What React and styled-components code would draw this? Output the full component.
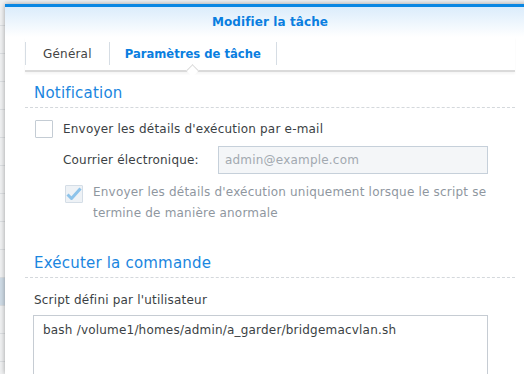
import React from "react";
import styled, { createGlobalStyle } from "styled-components";

const GlobalStyle = createGlobalStyle`
  html, body {
    margin: 0;
    padding: 0;
    width: 524px;
    height: 374px;
    overflow: hidden;
    background: #eef0f2;
    font-family: "DejaVu Sans", Verdana, sans-serif;
  }
`;

const Page = styled.div`
  display: flex;
  width: 524px;
  height: 374px;
  overflow: hidden;
`;

const BackList = styled.div`
  flex: 0 0 5px;
  display: flex;
  flex-direction: column;
  background: #f0f1f2;
`;

const BackRow = styled.div`
  flex: 0 0 ${(p) => (p.first ? 26 : 28)}px;
  box-sizing: border-box;
  border-bottom: 1px solid #dcdfe2;
  background: ${(p) => (p.selected ? "#cfdbe6" : "transparent")};
`;

const Modal = styled.div`
  flex: 0 0 530px;
  margin-top: 4px;
  background: #fff;
  border-top: 3px solid #0a87e3;
  box-shadow: 0 0 5px rgba(0, 0, 0, 0.35);
  display: flex;
  flex-direction: column;
  & > * {
    flex-shrink: 0;
  }
`;

const Header = styled.div`
  height: 30px;
  display: flex;
  align-items: center;
  justify-content: center;
  background: linear-gradient(#dbecfb, #ffffff);
  color: #0a7ee0;
  font-weight: bold;
  font-size: 12px;
  letter-spacing: 0.1px;
`;

const TabBar = styled.div`
  margin: 0 20px;
  height: 33px;
  display: flex;
  align-items: center;
  border-bottom: 2px solid #dadada;
  box-shadow: 0 2px 2px rgba(0, 0, 0, 0.04);
  position: relative;
`;

const Tab = styled.div`
  height: 23px;
  display: flex;
  align-items: center;
  padding: 0 ${(p) => (p.active ? 15 : 17)}px;
  border-left: ${(p) => (p.first ? "1px solid #d6dde4" : "none")};
  border-right: 1px solid #d6dde4;
  font-size: ${(p) => (p.active ? 11.6 : 12)}px;
  letter-spacing: ${(p) => (p.active ? 0 : 0.2)}px;
  color: ${(p) => (p.active ? "#0a7ee0" : "#444")};
  font-weight: ${(p) => (p.active ? "bold" : "normal")};
  position: relative;
`;

const Notch = styled.span`
  position: absolute;
  left: 50%;
  bottom: -10px;
  width: 8px;
  height: 8px;
  margin-left: -5px;
  background: #fff;
  border-left: 1px solid #dadada;
  border-top: 1px solid #dadada;
  transform: rotate(45deg);
`;

const Content = styled.div`
  padding: 0 20px;
  display: flex;
  flex-direction: column;
  & > * {
    flex-shrink: 0;
  }
`;

const SectionTitle = styled.div`
  height: ${(p) => p.h}px;
  box-sizing: border-box;
  display: flex;
  align-items: flex-end;
  padding: 0 0 5px 9px;
  color: #1a86e0;
  font-size: 15px;
  letter-spacing: 0.2px;
  border-bottom: 1px dashed #d4d8dc;
`;

const Row = styled.div`
  display: flex;
  align-items: ${(p) => (p.top ? "flex-start" : "center")};
  margin-top: ${(p) => p.mt || 0}px;
  padding-left: ${(p) => p.indent || 0}px;
`;

const Box = styled.span`
  flex: 0 0 auto;
  width: 18px;
  height: 18px;
  box-sizing: border-box;
  border: 1px solid ${(p) => (p.disabled ? "#d4dde6" : "#c4ccd4")};
  background: ${(p) => (p.disabled ? "#eef2f6" : "#fff")};
  border-radius: 1px;
  margin-right: 10px;
  display: flex;
  align-items: center;
  justify-content: center;
`;

const Label = styled.span`
  font-size: 12px;
  letter-spacing: 0.2px;
  color: ${(p) => (p.muted ? "#8f979f" : "#3b3f44")};
  line-height: ${(p) => p.lh || 18}px;
  flex: 0 0 ${(p) => (p.w ? p.w + "px" : "auto")};
  margin-top: ${(p) => p.mt || 0}px;
`;

const Input = styled.div`
  width: 270px;
  height: 28px;
  box-sizing: border-box;
  border: 1px solid #c6d0da;
  background: #f4f6f8;
  color: #a2a9b0;
  font-size: 12px;
  letter-spacing: 0.2px;
  display: flex;
  align-items: center;
  padding-left: 6px;
`;

const TextArea = styled.div`
  margin: 6px 0 0 8px;
  width: 455px;
  height: 80px;
  box-sizing: border-box;
  border: 1px solid #c6ccd3;
  padding: 7px 9px;
  font-size: 12px;
  letter-spacing: 0.2px;
  color: #3b3f44;
`;

const Check = () => (
  <svg width="16" height="14" viewBox="0 0 16 14">
    <path d="M1.5 7.5 L5.5 11.5 L14.5 1.5" fill="none" stroke="#8dc3ea" strokeWidth="3" strokeLinejoin="round" />
  </svg>
);

export default function App() {
  const rows = Array.from({ length: 13 });
  return (
    <>
      <GlobalStyle />
      <Page>
        <BackList>
          {rows.map((_, i) => (
            <BackRow key={i} first={i === 0} selected={i === 10} />
          ))}
        </BackList>
        <Modal>
          <Header>Modifier la tâche</Header>
          <TabBar>
            <Tab first>Général</Tab>
            <Tab active>
              Paramètres de tâche
              <Notch />
            </Tab>
          </TabBar>
          <Content>
            <SectionTitle h={36}>Notification</SectionTitle>
            <Row mt={12} indent={10}>
              <Box />
              <Label>Envoyer les détails d'exécution par e-mail</Label>
            </Row>
            <Row mt={8} indent={38}>
              <Label w={155}>Courrier électronique:</Label>
              <Input>admin@example.com</Input>
            </Row>
            <Row mt={11} indent={40} top>
              <Box disabled>
                <Check />
              </Box>
              <Label muted lh={21} w={400} mt={-3}>
                Envoyer les détails d'exécution uniquement lorsque le script se termine de manière anormale
              </Label>
            </Row>
            <SectionTitle h={54}>Exécuter la commande</SectionTitle>
            <Row mt={13} indent={9}>
              <Label>Script défini par l'utilisateur</Label>
            </Row>
            <TextArea>bash /volume1/homes/admin/a_garder/bridgemacvlan.sh</TextArea>
          </Content>
        </Modal>
      </Page>
    </>
  );
}
